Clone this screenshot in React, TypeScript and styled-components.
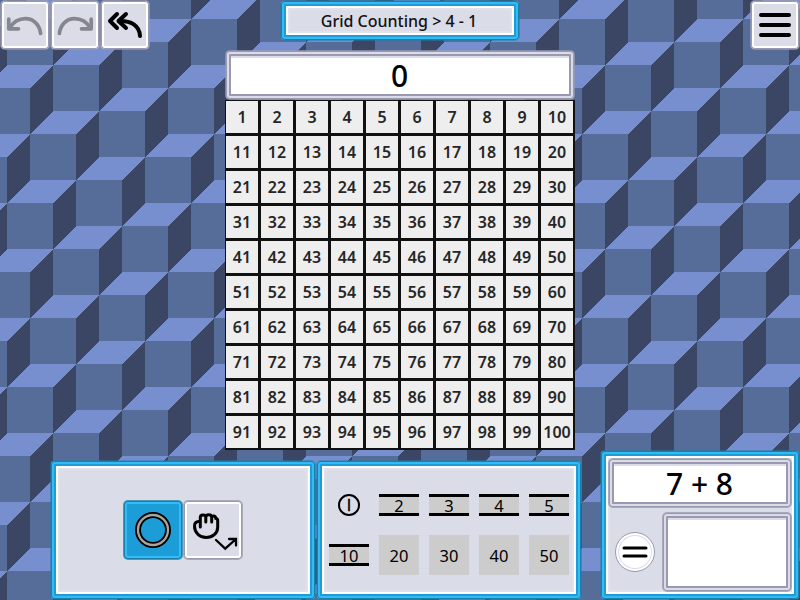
import React from "react";
import styled, { createGlobalStyle, css } from "styled-components";

const Global = createGlobalStyle`
  * { box-sizing: border-box; }
  html, body { margin: 0; padding: 0; overflow: hidden; }
  body { font-family: "Noto Sans", "Open Sans", sans-serif; color: #000; }
`;

const Screen = styled.main`
  width: 800px;
  height: 600px;
  overflow: hidden;
  display: grid;
  grid-template: 100% / 100%;
`;

const Backdrop = styled.svg`
  grid-area: 1 / 1;
  width: 800px;
  height: 600px;
  display: block;
`;

const Layout = styled.div`
  grid-area: 1 / 1;
  z-index: 1;
  display: grid;
  grid-template-columns: 225px 350px 225px;
  grid-template-rows: 450px 150px;
`;

const TopLeft = styled.div`
  display: flex;
  align-items: flex-start;
`;

const TopRight = styled.div`
  display: flex;
  align-items: flex-start;
  justify-content: flex-end;
`;

const Center = styled.section`
  display: flex;
  flex-direction: column;
  align-items: center;
`;

const BottomBar = styled.section`
  grid-column: 1 / -1;
  display: flex;
  align-items: flex-end;
  padding-left: 50px;
`;

const blueFrame = css`
  border: 1px solid rgba(26, 128, 171, 0.5);
  border-radius: 5px;
  box-shadow: inset 0 0 0 1px #1a80ab, inset 0 0 0 3px #33bbf5,
    inset 0 0 0 5px #1c9dd8, inset 0 0 0 7px #fff, inset 0 0 0 9px #e1e2ec;
  background: #dadce8;
  background-clip: padding-box;
`;

const greyFrame = css`
  border: 1px solid rgba(153, 153, 178, 0.75);
  border-radius: 5px;
  background: #fff;
  background-clip: padding-box;
  box-shadow: inset 0 0 0 1px #9999b2, inset 0 0 0 3px #dadce8,
    inset 0 0 0 5px #9999b2, inset 0 7px 0 0 #dadce8;
`;

const ToolButton = styled.button<{ $active?: boolean; $size: number }>`
  width: ${(p) => p.$size}px;
  height: ${(p) => p.$size}px;
  padding: 0;
  display: flex;
  align-items: center;
  justify-content: center;
  border-radius: 5px;
  border: 1px solid ${(p) => (p.$active ? "rgba(26,128,171,0.75)" : "rgba(153,153,178,0.75)")};
  background: ${(p) => (p.$active ? "#1c9dd8" : "#dadce8")};
  background-clip: padding-box;
  box-shadow: inset 0 0 0 1px ${(p) => (p.$active ? "#1a80ab" : "#9999b2")},
    inset 0 0 0 3px ${(p) => (p.$active ? "#33bbf5" : "#fff")};
  svg { display: block; flex: none; }
`;

const Title = styled.h1`
  ${blueFrame}
  width: 240px;
  height: 41px;
  margin: 0 0 9px;
  padding: 1px 2px 0 0;
  font-size: 16px;
  font-weight: 500;
  line-height: 39px;
  text-align: center;
  color: #111;
  white-space: nowrap;
`;

const Field = styled.div<{ $w: number; $h: number }>`
  ${greyFrame}
  width: ${(p) => p.$w}px;
  height: ${(p) => p.$h}px;
  padding: 2px 1px 0 0;
  display: flex;
  align-items: center;
  justify-content: center;
  font-size: 30px;
  font-weight: 500;
  line-height: 1;
`;

const NumberGrid = styled.div`
  width: 350px;
  height: 350px;
  display: grid;
  grid-template-columns: repeat(10, 35px);
  grid-template-rows: repeat(10, 35px);
`;

const Cell = styled.div`
  border: solid #111;
  border-width: 1px 2px 2px 1px;
  background: #eee;
  color: #262626;
  font-size: 16px;
  font-weight: 600;
  line-height: 33px;
  text-align: center;
`;

const Panel = styled.div`
  ${blueFrame}
  width: 266px;
  height: 140px;
  display: flex;
  align-items: center;
  justify-content: center;
`;

const StampPanel = styled(Panel)`
  margin-right: 18px;
`;

const Stamps = styled.div`
  display: grid;
  grid-template-columns: repeat(5, 40px);
  grid-template-rows: repeat(2, 40px);
  gap: 10px;
  align-items: center;
  justify-items: center;
`;

const Stamp = styled.button<{ $kind: "circle" | "bar" | "square" }>`
  padding: 0;
  width: 40px;
  border: 0 solid #000;
  background: #ccc;
  font: 400 16.5px "Noto Sans", sans-serif;
  color: #000;
  display: flex;
  align-items: center;
  justify-content: center;
  line-height: 17px;
  height: 40px;
  padding-top: 1px;
  ${(p) => p.$kind === "bar" && css`height: 22px; border-width: 3px 0; padding: 0;`}
  ${(p) =>
    p.$kind === "circle" &&
    css`
      width: 22px;
      height: 22px;
      border-width: 2px;
      border-radius: 50%;
      background: #dadce8;
      font-family: "Liberation Sans", sans-serif;
      font-size: 16px;
      padding: 0;
      -webkit-text-stroke: 0.3px #000;
    `}
`;

const EquationPanel = styled.div`
  ${blueFrame}
  width: 200px;
  height: 150px;
  padding: 7px;
  display: flex;
  flex-direction: column;
  gap: 4px;
`;

const AnswerRow = styled.div`
  display: flex;
  align-items: center;
  justify-content: space-between;
  padding-left: 7px;
`;

const EqualsButton = styled.button`
  width: 40px;
  height: 40px;
  padding: 0;
  border-radius: 50%;
  border: 1px solid #9999b2;
  background: #fff;
  box-shadow: inset 0 0 0 2px #fff, inset 0 0 0 3px #dadce8;
  display: flex;
  align-items: center;
  justify-content: center;
  svg { flex: none; }
`;

/* Oblique cubes: a 46px face with 23px of depth, eight cubes to each 184px tile. */
const CUBES = Array.from({ length: 13 }, (_, k) => k - 4).flatMap((i) => {
  const y = (((i * 5) % 8) + 8) % 8;
  return [y - 8, y, y + 8].map((j) => [i * 23, j * 23]);
});

const Cubes = () => (
  <Backdrop viewBox="0 0 800 600" shapeRendering="crispEdges">
    <defs>
      <pattern id="cubes" x="76" y="180" width="184" height="184" patternUnits="userSpaceOnUse">
        <rect width="184" height="184" fill="#566c99" />
        {CUBES.map(([x, y]) => (
          <g key={`${x}:${y}`} transform={`translate(${x} ${y})`}>
            <path d="M0 0H46V46H0Z" fill="#566c99" />
            <path d="M0 0L23-23H69L46 0Z" fill="#778fcf" />
            <path d="M46 0L69-23V23L46 46Z" fill="#3b4664" />
          </g>
        ))}
      </pattern>
    </defs>
    <rect width="800" height="600" fill="url(#cubes)" />
  </Backdrop>
);

const CurvedArrow = ({ flip = false }: { flip?: boolean }) => (
  <svg width="46" height="46" viewBox="2 2 46 46" fill="none" stroke="#85868e" strokeWidth="3.7" strokeLinecap="round" strokeLinejoin="round">
    <g transform={flip ? "translate(50 0) scale(-1 1)" : undefined}>
      <path d="M40.600 33.500C39.500 24 33 18.700 25.500 18.700C18.500 18.700 13 22.500 9.500 28" />
      <path d="M8.800 19.200V28.800H18.500" />
    </g>
  </svg>
);

const UndoAll = () => (
  <svg width="46" height="46" viewBox="2 2 46 46" fill="none" stroke="#000" strokeWidth="4" strokeLinecap="round" strokeLinejoin="round">
    <path d="M17 14L10 21L17 28" />
    <path d="M26 14L18.500 21L26 28" />
    <path d="M19 21C31 20.500 39.500 25.500 40 36" />
  </svg>
);

const Menu = () => (
  <svg width="46" height="46" viewBox="2 2 46 46" stroke="#000" strokeWidth="4" strokeLinecap="round">
    <path d="M11 15H39M11 25H39M11 35H39" />
  </svg>
);

const Ring = () => (
  <svg width="40" height="40" viewBox="-20 -20 40 40" fill="none">
    <circle r="15" stroke="#000" strokeWidth="6" />
    <circle r="15" stroke="#aaa49f" strokeWidth="2.300" />
  </svg>
);

const DragHand = () => (
  <svg width="56" height="56" viewBox="2 2 56 56" fill="none" stroke="#000" strokeLinecap="round" strokeLinejoin="round">
    <path
      strokeWidth="3"
      d="M17.300 27V17.500Q17.300 15 20 15Q22.800 15 22.800 17.500V22M22.800 17.500Q22.800 14.800 25.700 14.800Q28.700 14.800 28.700 17.500V22M28.700 17.500Q29 15.800 31 16Q32.600 16.300 32.800 18.500Q34.700 18.500 34.700 20.500V27C34.700 33.500 29.500 37.600 23.200 37.600C16.500 37.600 11.500 32.500 11.500 26C11.500 22.500 13.500 21.300 17.300 21.300"
    />
    <path strokeWidth="2.300" strokeLinejoin="miter" d="M33 40L42.200 48.600L53 39M46 39H53V45.500" />
  </svg>
);

const Equals = () => (
  <svg width="30" height="20" viewBox="0 0 30 20" stroke="#000" strokeWidth="3" strokeLinecap="round">
    <path d="M4 6H26M4 14H26" />
  </svg>
);

const numbers = Array.from({ length: 100 }, (_, i) => i + 1);
const bars = [2, 3, 4, 5, 10];
const stamps = [2, 3, 4, 5, 10, 20, 30, 40, 50];

export default function App() {
  return (
    <Screen>
      <Global />
      <Cubes />
      <Layout>
        <TopLeft>
          <ToolButton $size={50} aria-label="Undo"><CurvedArrow /></ToolButton>
          <ToolButton $size={50} aria-label="Redo"><CurvedArrow flip /></ToolButton>
          <ToolButton $size={50} aria-label="Undo all"><UndoAll /></ToolButton>
        </TopLeft>
        <Center>
          <Title>Grid Counting &gt; 4 - 1</Title>
          <Field $w={350} $h={50}>0</Field>
          <NumberGrid>
            {numbers.map((n) => <Cell key={n}>{n}</Cell>)}
          </NumberGrid>
        </Center>
        <TopRight>
          <ToolButton $size={50} aria-label="Menu"><Menu /></ToolButton>
        </TopRight>
        <BottomBar>
          <Panel>
            <ToolButton $size={60} $active aria-label="Circle"><Ring /></ToolButton>
            <ToolButton $size={60} aria-label="Drag"><DragHand /></ToolButton>
          </Panel>
          <StampPanel>
            <Stamps>
              <Stamp $kind="circle">I</Stamp>
              {stamps.map((n) => (
                <Stamp key={n} $kind={bars.includes(n) ? "bar" : "square"}>{n}</Stamp>
              ))}
            </Stamps>
          </StampPanel>
          <EquationPanel>
            <Field $w={184} $h={50}>7 + 8</Field>
            <AnswerRow>
              <EqualsButton aria-label="Equals"><Equals /></EqualsButton>
              <Field $w={130} $h={80} />
            </AnswerRow>
          </EquationPanel>
        </BottomBar>
      </Layout>
    </Screen>
  );
}
